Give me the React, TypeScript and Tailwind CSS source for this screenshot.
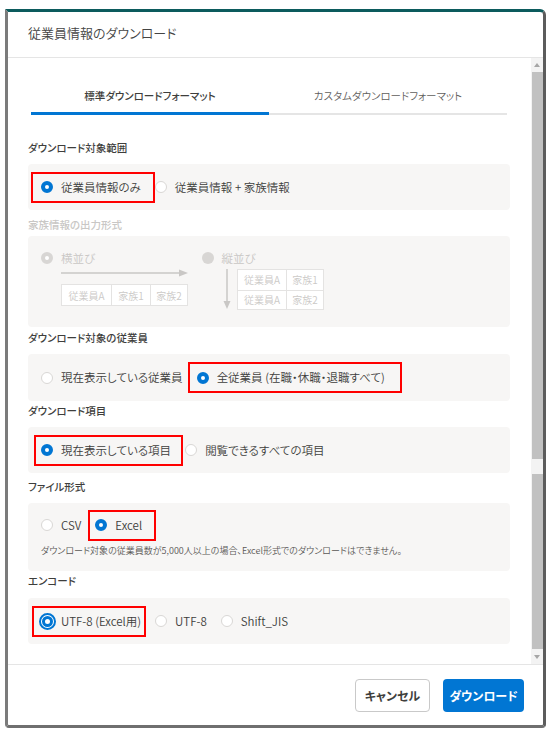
import React from "react";

type RState = "on" | "off" | "focus" | "disOn" | "disOff";

function Radio({ state }: { state: RState }) {
  let inner: React.ReactNode = null;
  if (state === "on")
    inner = <span className="block h-[12px] w-[12px] shrink-0 rounded-full border-[4px] border-[#0176d3] bg-white" />;
  else if (state === "off")
    inner = <span className="block h-[12px] w-[12px] shrink-0 rounded-full border border-[#d9d7d5] bg-white" />;
  else if (state === "focus")
    inner = (
      <span className="flex h-[17px] w-[17px] shrink-0 items-center justify-center rounded-full border-2 border-[#0176d3] bg-white">
        <span className="block h-[11px] w-[11px] rounded-full border-[3px] border-[#0176d3] bg-white" />
      </span>
    );
  else if (state === "disOn")
    inner = <span className="block h-[12px] w-[12px] shrink-0 rounded-full border-[4px] border-[#d8d6d4] bg-white" />;
  else inner = <span className="block h-[12px] w-[12px] shrink-0 rounded-full bg-[#d8d6d4]" />;
  return <span className="flex h-[12px] w-[12px] shrink-0 items-center justify-center">{inner}</span>;
}

function Option({
  state,
  children,
  hl,
  disabled,
}: {
  state: RState;
  children: React.ReactNode;
  hl?: string;
  disabled?: boolean;
}) {
  return (
    <div className="relative flex h-[17px] items-center gap-[8px]">
      {hl && <span className={`pointer-events-none absolute -bottom-[7px] -top-[7px] border-2 border-[#ff0000] ${hl}`} />}
      <Radio state={state} />
      <span
        className={`whitespace-nowrap text-[11.5px] font-[350] leading-[17px] ${disabled ? "text-[#c9c7c5]" : "text-[#3e3e3c]"}`}
      >
        {children}
      </span>
    </div>
  );
}

function Label({ children, disabled, className = "" }: { children: React.ReactNode; disabled?: boolean; className?: string }) {
  return (
    <div
      className={`h-[20px] whitespace-nowrap text-[10.5px] font-medium leading-[20px] ${
        disabled ? "text-[#c9c7c5]" : "text-[#3e3e3c]"
      } ${className}`}
    >
      {children}
    </div>
  );
}

function Cell({ w, children, first }: { w: string; children: React.ReactNode; first?: boolean }) {
  return (
    <div
      className={`flex items-center justify-center text-[10px] font-[350] text-[#cbc9c7] ${w} ${first ? "" : "border-l border-[#e4e3e2]"}`}
    >
      {children}
    </div>
  );
}

export default function App() {
  return (
    <div className="h-[735px] w-[556px] bg-white pl-[5px] pt-[9px] font-['Noto_Sans_CJK_JP','Noto_Sans',sans-serif] [font-feature-settings:'palt']">
      <div className="flex h-[719px] w-[541px] flex-col overflow-hidden rounded-b-[4px] rounded-tr-[6px] border-b-[3px] border-l-[3px] border-r-[3px] border-t-[3px] border-b-[#6f6f6f] border-l-[#7b7b7b] border-r-[#5c5c5c] border-t-[#0c5b5d] bg-white">
        {/* header */}
        <div className="flex h-[46px] shrink-0 items-center border-b border-[#e5e5e5] pb-[3px] pl-[20px]">
          <span className="text-[13px] font-[350] text-[#444444]">従業員情報のダウンロード</span>
        </div>

        {/* body */}
        <div className="flex h-[606px] shrink-0">
          <div className="flex w-[523px] flex-col">
            {/* tabs */}
            <div className="ml-[23px] mr-[24px] grid grid-cols-2 pt-[28px]">
              <div className="flex flex-col">
                <div className="h-[20px] text-center text-[10.5px] font-medium leading-[20px] text-[#3e3e3c]">
                  標準ダウンロードフォーマット
                </div>
                <div className="mt-[6px] h-[3px] bg-[#0176d3]" />
              </div>
              <div className="flex flex-col">
                <div className="h-[20px] text-center text-[10.5px] font-[350] leading-[20px] text-[#5f5e5c]">
                  カスタムダウンロードフォーマット
                </div>
                <div className="mt-[7px] h-[2px] bg-[#e5e5e5]" />
              </div>
            </div>

            <div className="ml-[20px] w-[482px]">
              <Label className="mt-[23px]">ダウンロード対象範囲</Label>
              <div className="mt-[6px] flex h-[46px] items-center gap-[14px] rounded-[4px] bg-[#f7f6f5] px-[13px]">
                <Option state="on" hl="-left-[10px] -right-[14px]">
                  従業員情報のみ
                </Option>
                <Option state="off">従業員情報 + 家族情報</Option>
              </div>

              <Label disabled className="mt-[5px]">
                家族情報の出力形式
              </Label>
              <div className="mt-[1px] flex h-[91px] gap-[13.5px] rounded-[4px] bg-[#f7f6f5] px-[13px] pt-[13.5px]">
                <div className="flex w-[147px] flex-col">
                  <Option state="disOn" disabled>
                    横並び
                  </Option>
                  <svg className="ml-[20px] mt-[2.5px]" width="127" height="8" viewBox="0 0 127 8">
                    <line x1="0" y1="4" x2="120" y2="4" stroke="#c9c7c5" strokeWidth="1.5" />
                    <polygon points="118,0.5 127,4 118,7.5" fill="#c9c7c5" />
                  </svg>
                  <div className="ml-[20px] mt-[7px] flex h-[22px] w-[127px] border border-[#e4e3e2] bg-white">
                    <Cell w="w-[49px]" first>
                      従業員A
                    </Cell>
                    <Cell w="w-[39px]">家族1</Cell>
                    <Cell w="w-[37px]">家族2</Cell>
                  </div>
                </div>
                <div className="flex flex-col">
                  <Option state="disOff" disabled>
                    縦並び
                  </Option>
                  <div className="ml-[20.5px] mt-[2.5px] flex gap-[5px]">
                    <svg width="10" height="40" viewBox="0 0 10 40">
                      <line x1="5" y1="0" x2="5" y2="33" stroke="#c9c7c5" strokeWidth="1.5" />
                      <polygon points="1.5,32 8.5,32 5,40" fill="#c9c7c5" />
                    </svg>
                    <div className="flex h-[41px] w-[87px] flex-col border border-[#e4e3e2] bg-white">
                      <div className="flex h-[19.5px]">
                        <Cell w="w-[48px]" first>
                          従業員A
                        </Cell>
                        <Cell w="w-[37px]">家族1</Cell>
                      </div>
                      <div className="flex h-[19.5px] border-t border-[#e4e3e2]">
                        <Cell w="w-[48px]" first>
                          従業員A
                        </Cell>
                        <Cell w="w-[37px]">家族2</Cell>
                      </div>
                    </div>
                  </div>
                </div>
              </div>

              <Label className="mt-[1px]">ダウンロード対象の従業員</Label>
              <div className="mt-[6px] flex h-[47px] items-center gap-[14px] rounded-[4px] bg-[#f7f6f5] px-[13px]">
                <Option state="off">現在表示している従業員</Option>
                <Option state="on" hl="-left-[8.5px] -right-[17px]">
                  全従業員 (在職・休職・退職すべて)
                </Option>
              </div>

              <Label>ダウンロード項目</Label>
              <div className="mt-[6px] flex h-[46px] items-center gap-[14px] rounded-[4px] bg-[#f7f6f5] px-[13px]">
                <Option state="on" hl="-left-[7.5px] -right-[12px]">
                  現在表示している項目
                </Option>
                <Option state="off">閲覧できるすべての項目</Option>
              </div>

              <Label className="mt-[4px]">ファイル形式</Label>
              <div className="mt-[6px] flex h-[68px] flex-col rounded-[4px] bg-[#f7f6f5] px-[13px] pt-[13.5px]">
                <div className="flex items-center gap-[14px]">
                  <Option state="off">CSV</Option>
                  <Option state="on" hl="-left-[7.5px] -right-[14px]">
                    Excel
                  </Option>
                </div>
                <div className="mt-[10.5px] whitespace-nowrap text-[9px] font-[350] leading-[14px] text-[#5a5856]">
                  ダウンロード対象の従業員数が5,000人以上の場合、Excel形式でのダウンロードはできません。
                </div>
              </div>

              <Label>エンコード</Label>
              <div className="mt-[7px] flex h-[46px] items-center gap-[14px] rounded-[4px] bg-[#f7f6f5] px-[13px]">
                <Option state="focus" hl="-left-[9px] -right-[5px]">
                  UTF-8 (Excel用)
                </Option>
                <Option state="off">UTF-8</Option>
                <Option state="off">Shift_JIS</Option>
              </div>
            </div>
          </div>

          {/* scrollbar */}
          <div className="flex w-[12px] flex-col bg-[#f3f3f3]">
            <div className="flex h-[14px] items-center justify-center">
              <svg width="6" height="4" viewBox="0 0 6 4">
                <polygon points="0,4 6,4 3,0" fill="#a6a6a6" />
              </svg>
            </div>
            <div className="ml-[1px] h-[387px] w-[11px] bg-[#c1c1c1]" />
            <div className="h-[15px]" />
            <div className="ml-[1px] h-[175px] w-[11px] bg-[#c1c1c1]" />
            <div className="flex h-[15px] items-center justify-center">
              <svg width="6" height="4" viewBox="0 0 6 4">
                <polygon points="0,0 6,0 3,4" fill="#a6a6a6" />
              </svg>
            </div>
          </div>
        </div>

        {/* footer */}
        <div className="flex h-[61px] shrink-0 items-start justify-end gap-[13px] border-t border-[#e5e5e5] pr-[19px] pt-[14px]">
          <button className="h-[33px] w-[75px] rounded-[4px] border border-[#c9c9c9] bg-white text-[12px] font-bold text-[#3e3e3c]">
            キャンセル
          </button>
          <button className="h-[33px] w-[81px] rounded-[4px] bg-[#0176d3] text-[12px] font-bold text-white">
            ダウンロード
          </button>
        </div>
      </div>
    </div>
  );
}
